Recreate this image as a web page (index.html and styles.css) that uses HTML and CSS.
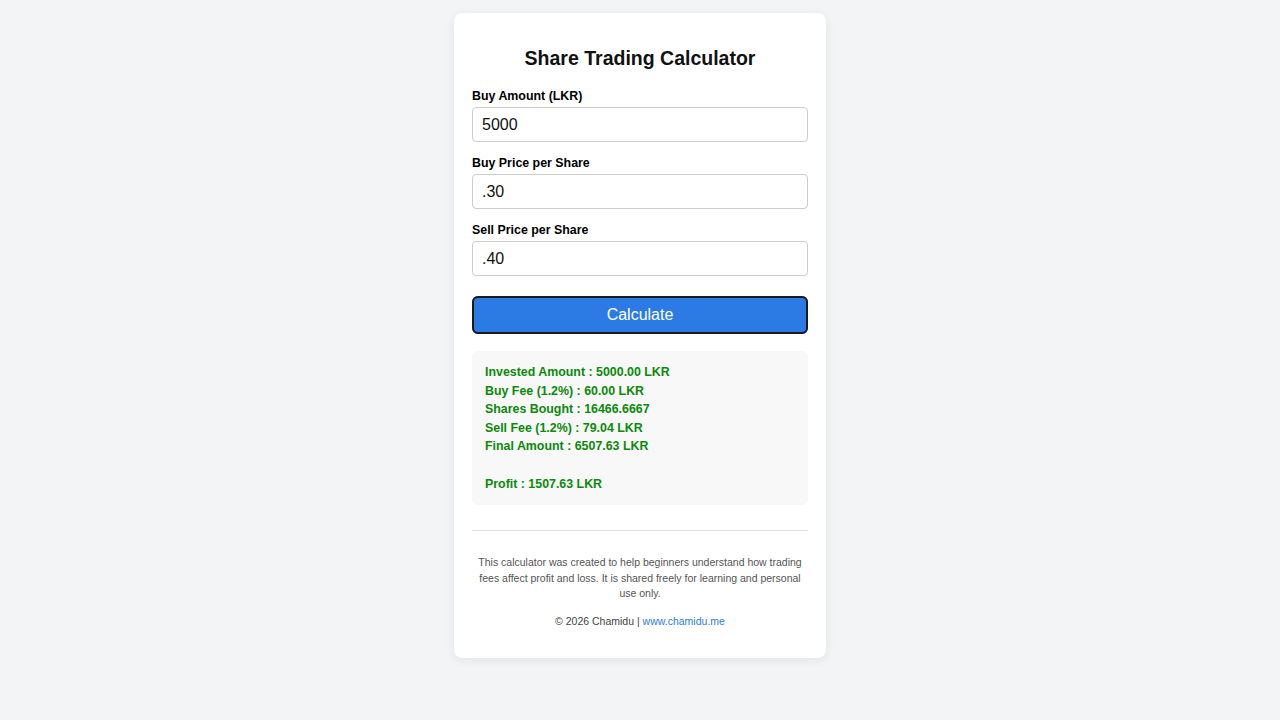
FILE: index.html
```
<!DOCTYPE html>
<html lang="en">
<head>
    <meta charset="UTF-8">
    <meta name="viewport" content="width=device-width, initial-scale=1.0">
    <title>Share Trading Calculator</title>
    <link rel="stylesheet" href="styles.css">
</head>
<body>
    <div class="container">
        <h2>Share Trading Calculator</h2>

        <label for="buyAmount">Buy Amount (LKR)</label>
        <input type="number" id="buyAmount" value="5000">

        <label for="buyPrice">Buy Price per Share</label>
        <input type="text" id="buyPrice" value=".30">

        <label for="sellPrice">Sell Price per Share</label>
        <input type="text" id="sellPrice" value=".40">

        <button id="calcButton" onclick="calculate()">Calculate</button>

        <div class="result" id="result"></div>

        <hr>

        <p class="note">This calculator was created to help beginners understand how trading fees affect profit and loss. It is shared freely for learning and personal use only.</p>
        <p class="copy">&copy; 2026 Chamidu | <a href="#">www.chamidu.me</a></p>
    </div>

    <script>
        const FEE = 0.012;

        // Work out fees, shares and profit
        function calculate() {
            const amount = parseFloat(document.getElementById('buyAmount').value);
            const buyPrice = parseFloat(document.getElementById('buyPrice').value);
            const sellPrice = parseFloat(document.getElementById('sellPrice').value);
            const result = document.getElementById('result');

            if (!amount || !buyPrice || !sellPrice) {
                result.innerHTML = 'Please fill all fields.';
                return;
            }

            const buyFee = amount * FEE;
            const shares = (amount - buyFee) / buyPrice;
            const gross = shares * sellPrice;
            const sellFee = gross * FEE;
            const finalAmount = gross - sellFee;
            const profit = finalAmount - amount;

            result.innerHTML = `
                Invested Amount : ${amount.toFixed(2)} LKR<br>
                Buy Fee (1.2%) : ${buyFee.toFixed(2)} LKR<br>
                Shares Bought : ${shares.toFixed(4)}<br>
                Sell Fee (1.2%) : ${sellFee.toFixed(2)} LKR<br>
                Final Amount : ${finalAmount.toFixed(2)} LKR<br><br>
                ${profit >= 0 ? 'Profit' : 'Loss'} : ${Math.abs(profit).toFixed(2)} LKR
            `;
            result.className = profit >= 0 ? 'result' : 'result loss';
        }

        calculate();
        document.getElementById('calcButton').focus();
    </script>
</body>
</html>
```

FILE: styles.css
```
body {
    font-family: "Liberation Sans", Arial, sans-serif;
    background-color: #f3f4f6;
    margin: 0;
    padding: 13px 0;
}

.container {
    width: 336px;
    margin: 0 auto;
    padding: 18px 18px 31px;
    background-color: #fff;
    border-radius: 8px;
    box-shadow: 0 2px 10px rgba(0, 0, 0, 0.08);
}

h2 {
    text-align: center;
    font-size: 19.5px;
    margin: 16px 0 19px;
    color: #111;
}

label {
    display: block;
    font-size: 12.4px;
    font-weight: bold;
    margin-bottom: 4px;
}

input {
    display: block;
    width: 100%;
    box-sizing: border-box;
    height: 35px;
    padding: 8px 9px;
    margin-bottom: 14px;
    border: 1px solid #ccc;
    border-radius: 4px;
    font-family: inherit;
    font-size: 16px;
    color: #111;
}

button {
    display: block;
    width: 100%;
    height: 38px;
    margin-top: 20px;
    border: none;
    border-radius: 6px;
    background-color: #2c7be5;
    color: white;
    font-family: inherit;
    font-size: 16px;
    cursor: pointer;
}

button:focus {
    outline: 2px solid #1a1a1a;
    outline-offset: -2px;
}

.result {
    margin-top: 17px;
    padding: 12px 13px;
    background-color: #f8f8f8;
    border-radius: 6px;
    color: #0a8a0a;
    font-size: 12.4px;
    font-weight: bold;
    line-height: 18.6px;
}

.result.loss {
    color: #d32f2f;
}

hr {
    border: none;
    border-top: 1px solid #ddd;
    margin: 25px 0 24px;
}

.note {
    font-size: 10.5px;
    color: #555;
    text-align: center;
    line-height: 15.5px;
    margin: 0 0 13px;
}

.copy {
    font-size: 10.5px;
    color: #444;
    text-align: center;
    margin: 0;
}

.copy a {
    color: #2c7be5;
    text-decoration: none;
}
```
